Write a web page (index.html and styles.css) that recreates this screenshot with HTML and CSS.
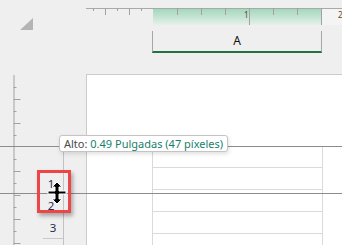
FILE: index.html
```html
<!DOCTYPE html>
<html lang="es">
<head>
    <meta charset="UTF-8">
    <meta name="viewport" content="width=device-width, initial-scale=1.0">
    <title>Alto de fila</title>
    <link rel="stylesheet" href="styles.css">
</head>
<body>

<div class="app">
    <div class="corner">
        <svg width="13" height="12" viewBox="0 0 13 12"><polygon points="13,0 13,12 0,12" fill="#b4b4b4"/></svg>
    </div>

    <div class="top">
        <svg class="ruler-top" width="256" height="17" viewBox="0 0 256 17">
            <defs>
                <linearGradient id="verde" x1="0" y1="0" x2="0" y2="1">
                    <stop offset="0" stop-color="#9fd6b8"/>
                    <stop offset="1" stop-color="#e6f0ea"/>
                </linearGradient>
            </defs>
            <rect x="67" y="0" width="169" height="17" fill="url(#verde)"/>
            <rect x="236" y="0" width="20" height="17" fill="#f4f4f4"/>
            <line x1="0" y1="0.5" x2="256" y2="0.5" stroke="#a9a9a9"/>
            <g stroke="#a2a2a2">
                <line x1="7.5" y1="0" x2="7.5" y2="3"/>
                <line x1="19.5" y1="0" x2="19.5" y2="7"/>
                <line x1="31.5" y1="0" x2="31.5" y2="3"/>
                <line x1="43.5" y1="0" x2="43.5" y2="7"/>
                <line x1="55.5" y1="0" x2="55.5" y2="3"/>
                <line x1="91.5" y1="0" x2="91.5" y2="7"/>
                <line x1="115.5" y1="0" x2="115.5" y2="7"/>
                <line x1="139.5" y1="0" x2="139.5" y2="7"/>
                <line x1="163.5" y1="0" x2="163.5" y2="17"/>
                <line x1="187.5" y1="0" x2="187.5" y2="7"/>
                <line x1="211.5" y1="0" x2="211.5" y2="7"/>
                <line x1="235.5" y1="0" x2="235.5" y2="17"/>
            </g>
            <text x="158" y="10" class="ruler-num">1</text>
            <text x="252" y="10" class="ruler-num">2</text>
        </svg>

        <div class="colhead">
            <div class="col-a">A</div>
        </div>
    </div>

    <div class="side">
        <svg class="ruler-left" width="30" height="171" viewBox="0 0 30 171">
            <g stroke="#a2a2a2">
                <line x1="10.5" y1="1" x2="10.5" y2="171"/>
                <line x1="10" y1="13.5" x2="13" y2="13.5"/>
                <line x1="10" y1="25.5" x2="17" y2="25.5"/>
                <line x1="10" y1="37.5" x2="13" y2="37.5"/>
                <line x1="10" y1="49.5" x2="17" y2="49.5"/>
                <line x1="10" y1="61.5" x2="13" y2="61.5"/>
                <line x1="10" y1="85.5" x2="13" y2="85.5"/>
                <line x1="10" y1="97.5" x2="17" y2="97.5"/>
                <line x1="10" y1="109.5" x2="13" y2="109.5"/>
                <line x1="10" y1="121.5" x2="17" y2="121.5"/>
                <line x1="10" y1="133.5" x2="13" y2="133.5"/>
                <line x1="10" y1="145.5" x2="17" y2="145.5"/>
                <line x1="10" y1="157.5" x2="13" y2="157.5"/>
                <line x1="10" y1="169.5" x2="17" y2="169.5"/>
            </g>
        </svg>
        <div class="rowhead">
            <div class="row-num">1</div>
            <div class="row-num">2</div>
            <div class="row-num row-sep">3</div>
            <div class="row-num">4</div>
        </div>
    </div>

    <div class="page">
        <div class="cells">
            <div class="cell"></div>
            <div class="cell"></div>
            <div class="cell"></div>
            <div class="cell"></div>
            <div class="cell"></div>
        </div>
    </div>
</div>

<div class="guide guide-top"></div>
<div class="guide guide-bottom"></div>

<div class="tooltip">Alto: <span class="valor">0.49 Pulgadas (47 píxeles)</span></div>

<div class="marco"></div>

<svg class="cursor" width="22" height="26" viewBox="0 0 22 26">
    <g fill="#000" stroke="#fff" stroke-width="1">
        <path d="M10 1 L15 6 L12 6 L12 10 L19 10 L19 13 L12 13 L12 18 L15 18 L10 23 L5 18 L8 18 L8 13 L1 13 L1 10 L8 10 L8 6 L5 6 Z"/>
    </g>
</svg>

</body>
</html>
```

FILE: styles.css
```css
body {
    margin: 0;
    width: 342px;
    height: 245px;
    overflow: hidden;
    position: relative;
    background-color: #efefef;
    font-family: "Noto Sans", "Open Sans", sans-serif;
}

.app {
    display: grid;
    grid-template-columns: 86px 256px;
    grid-template-rows: 74px 171px;
}

.corner {
    padding: 13px 0 0 20px;
}

.ruler-top {
    display: block;
    margin-top: 8px;
}

.ruler-num {
    font-size: 8px;
    fill: #5c4a2a;
    font-family: "Noto Sans", sans-serif;
}

.colhead {
    margin-top: 6px;
    height: 22px;
}

.col-a {
    margin-left: 66px;
    width: 168px;
    height: 20px;
    border-left: 1px solid #a6a6a6;
    border-right: 1px solid #a6a6a6;
    border-bottom: 2px solid #217346;
    text-align: center;
    font-size: 12px;
    line-height: 20px;
    color: #111;
}

.side {
    display: flex;
}

.ruler-left {
    display: block;
    flex: none;
    width: 37px;
}

.rowhead {
    margin-top: 76px;
    width: 27px;
    height: 95px;
    overflow: hidden;
    border-right: 1px solid #c2c2c2;
    padding-top: 23px;
    box-sizing: border-box;
    height: 95px;
}

.row-num {
    height: 22px;
    text-align: center;
    font-size: 11.5px;
    line-height: 22px;
    color: #1f2c4c;
    padding-left: 2px;
    box-sizing: border-box;
}

.row-sep {
    border-bottom: 1px solid #c8c8c8;
    margin-left: 6px;
    padding-left: 0;
}

.page {
    background-color: #fff;
    border-top: 1px solid #cbcbcb;
    border-left: 1px solid #cbcbcb;
}

.cells {
    margin: 71px 0 0 65px;
    border-left: 1px solid #dadada;
}

.cell {
    height: 22px;
    width: 170px;
    border-right: 1px solid #dadada;
    border-bottom: 1px solid #dadada;
    box-sizing: border-box;
}

.guide {
    position: absolute;
    left: 0;
    width: 342px;
    height: 1px;
    background-color: #8c8c8c;
}

.guide-top {
    top: 146px;
}

.guide-bottom {
    top: 193px;
}

.tooltip {
    position: absolute;
    left: 59px;
    top: 135px;
    height: 15px;
    padding: 0 4px;
    background-color: #fff;
    border: 1px solid #c4c4c4;
    border-radius: 3px;
    box-shadow: 1px 2px 4px rgba(0, 0, 0, 0.12);
    font-size: 11px;
    line-height: 15px;
    color: #4a4a4a;
    white-space: nowrap;
}

.valor {
    color: #17806c;
}

.marco {
    position: absolute;
    left: 37px;
    top: 170px;
    width: 28px;
    height: 37px;
    border: 3px solid #ec4646;
    box-shadow: 2px 3px 4px rgba(0, 0, 0, 0.3);
}

.cursor {
    position: absolute;
    left: 47px;
    top: 181px;
}
```
